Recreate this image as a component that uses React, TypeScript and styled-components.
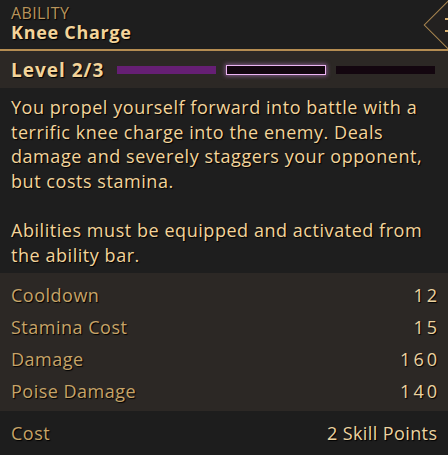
import styled, { createGlobalStyle } from "styled-components";

const GlobalStyle = createGlobalStyle`
  html, body {
    margin: 0;
    padding: 0;
    background: #1d1d1d;
  }
  body {
    font-family: "Open Sans", "DejaVu Sans", sans-serif;
  }
`;

interface BarProps {
  state: "filled" | "current" | "empty";
}

const Panel = styled.div`
  width: 448px;
  height: 455px;
  display: flex;
  flex-direction: column;
  overflow: hidden;
  text-shadow: 1px 1px 1px #000000;
`;

const Header = styled.div`
  position: relative;
  height: 51px;
  padding: 4px 11px 0;
  box-sizing: border-box;
  background: #1e1e1e;
  border-bottom: 2px solid #b58d52;
  overflow: hidden;
`;

const Kind = styled.div`
  font-size: 16px;
  line-height: 18px;
  font-weight: 500;
  letter-spacing: 0.4px;
  color: #b8945c;
`;

const Name = styled.div`
  font-size: 18px;
  line-height: 20px;
  font-weight: 700;
  letter-spacing: 0.7px;
  color: #f3d49a;
`;

const Badge = styled.div`
  position: absolute;
  top: 7px;
  left: 431px;
  width: 34px;
  height: 34px;
  border: 1.5px solid #a98650;
  background: #232120;
  transform: rotate(45deg);
`;

const BadgeMark = styled.div`
  position: absolute;
  right: 0;
  width: 3px;
  height: 2px;
  background: #d6b070;
`;

const LevelRow = styled.div`
  height: 37px;
  display: flex;
  align-items: center;
  padding: 0 13px 0 11px;
  background: #2c2825;
`;

const LevelText = styled.div`
  font-size: 19px;
  font-weight: 700;
  letter-spacing: 1px;
  color: #f3d49a;
  margin-right: 13px;
  white-space: nowrap;
`;

const Bars = styled.div`
  flex: 1;
  display: flex;
  gap: 10px;
  align-items: center;
`;

const Bar = styled.div<BarProps>`
  flex: 1;
  height: ${(p) => (p.state === "current" ? "10px" : "8px")};
  box-sizing: border-box;
  background: ${(p) => (p.state === "filled" ? "#661f74" : "#13060f")};
  border: ${(p) => (p.state === "current" ? "1.5px solid #ecb4f2" : "none")};
  box-shadow: ${(p) =>
    p.state === "current" ? "0 0 4px 1px rgba(200, 130, 215, 0.55)" : "none"};
`;

const Description = styled.div`
  padding: 7px 11px 6px;
  background: #1e1e1e;
  font-size: 18px;
  line-height: 24.6px;
  letter-spacing: 0.55px;
  color: #f3d49a;
  white-space: nowrap;
`;

const Stats = styled.div`
  padding: 6px 11px 4px;
  background: #2c2825;
  display: flex;
  flex-direction: column;
`;

const StatRow = styled.div`
  height: 32px;
  display: flex;
  align-items: center;
  justify-content: space-between;
  font-size: 18px;
`;

const Label = styled.span`
  color: #c7a468;
  letter-spacing: 0.5px;
`;

const Value = styled.span`
  color: #ecd3a0;
  letter-spacing: 3px;
  margin-right: -3px;
`;

const Footer = styled.div`
  flex: 1;
  display: flex;
  align-items: center;
  justify-content: space-between;
  padding: 0 11px;
  background: #1d1d1d;
  font-size: 18px;
`;

const CostValue = styled.span`
  color: #ecd3a0;
  letter-spacing: 0.4px;
  margin-right: -0.4px;
`;

const stats = [
  { label: "Cooldown", value: "12" },
  { label: "Stamina Cost", value: "15" },
  { label: "Damage", value: "160" },
  { label: "Poise Damage", value: "140" },
];

export default function App() {
  return (
    <>
      <GlobalStyle />
      <Panel>
        <Header>
          <Kind>ABILITY</Kind>
          <Name>Knee Charge</Name>
          <Badge />
          <BadgeMark style={{ top: 18 }} />
          <BadgeMark style={{ top: 30 }} />
        </Header>
        <LevelRow>
          <LevelText>Level 2/3</LevelText>
          <Bars>
            <Bar state="filled" />
            <Bar state="current" />
            <Bar state="empty" />
          </Bars>
        </LevelRow>
        <Description>
          You propel yourself forward into battle with a
          <br />
          terrific knee charge into the enemy. Deals
          <br />
          damage and severely staggers your opponent,
          <br />
          but costs stamina.
          <br />
          <br />
          Abilities must be equipped and activated from
          <br />
          the ability bar.
        </Description>
        <Stats>
          {stats.map((s) => (
            <StatRow key={s.label}>
              <Label>{s.label}</Label>
              <Value>{s.value}</Value>
            </StatRow>
          ))}
        </Stats>
        <Footer>
          <Label>Cost</Label>
          <CostValue>2 Skill Points</CostValue>
        </Footer>
      </Panel>
    </>
  );
}
